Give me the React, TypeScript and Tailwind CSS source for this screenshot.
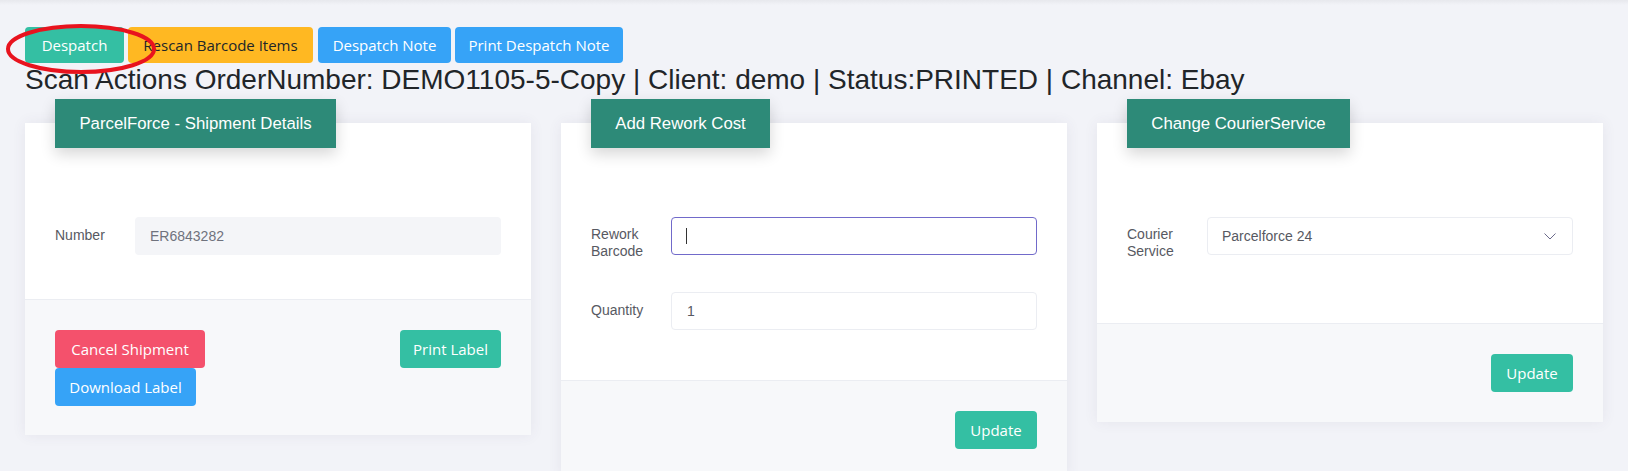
import React from "react";

function Btn({
  children,
  className,
}: {
  children: React.ReactNode;
  className: string;
}) {
  return (
    <div
      className={
        "flex items-center justify-center rounded-[4px] font-['Open_Sans',sans-serif] text-[15px] leading-none " +
        className
      }
    >
      {children}
    </div>
  );
}

function Tab({ title, width }: { title: string; width: string }) {
  return (
    <div
      className={
        "-mt-[24px] ml-[30px] flex h-[49px] items-center justify-center self-start bg-[#2d8a78] text-[16.8px] text-white shadow-[0_6px_14px_rgba(0,0,0,0.16)] " +
        width
      }
    >
      {title}
    </div>
  );
}

export default function App() {
  return (
    <div className="relative min-h-screen bg-[#f2f3f8] font-['Liberation_Sans',Arial,sans-serif] text-[#575962]">
      <div className="h-[5px] bg-gradient-to-b from-[#e7e8ed] to-[#f2f3f8]" />
      <div className="px-[25px]">
        <div className="mt-[22px] flex gap-[4px]">
          <Btn className="h-[36px] w-[99px] bg-[#34bfa3] text-white">Despatch</Btn>
          <Btn className="h-[36px] w-[185px] bg-[#ffb822] text-[#212529]">Rescan Barcode Items</Btn>
          <Btn className="ml-[1px] h-[36px] w-[133px] bg-[#36a3f7] text-white">Despatch Note</Btn>
          <Btn className="h-[36px] w-[168px] bg-[#36a3f7] text-white">Print Despatch Note</Btn>
        </div>
        <h3 className="mt-[1px] text-[28px] leading-[32px] text-[#212529]">
          Scan Actions OrderNumber: DEMO1105-5-Copy | Client: demo | Status:PRINTED | Channel: Ebay
        </h3>

        <div className="mt-[27px] grid grid-cols-3 items-start gap-[30px]">
          {/* Card 1 */}
          <div className="flex flex-col bg-white shadow-[0_0_13px_0_rgba(82,63,105,0.08)]">
            <Tab title="ParcelForce - Shipment Details" width="w-[281px]" />
            <div className="px-[30px] pt-[69px] pb-[44px]">
              <div className="flex">
                <div className="w-[80px] pt-[10px] text-[14px] leading-[17px]">Number</div>
                <div className="flex h-[38px] flex-1 items-center rounded-[4px] bg-[#f4f5f8] px-[15px] text-[14px] text-[#6f727d]">
                  ER6843282
                </div>
              </div>
            </div>
            <div className="flex justify-between border-t border-[#ebedf2] bg-[#f7f8fa] px-[30px] pt-[30px] pb-[29px]">
              <div className="flex flex-col">
                <Btn className="h-[38px] w-[150px] bg-[#f4516c] text-white">Cancel Shipment</Btn>
                <Btn className="h-[38px] w-[141px] bg-[#36a3f7] text-white">Download Label</Btn>
              </div>
              <Btn className="h-[38px] w-[101px] bg-[#34bfa3] text-white">Print Label</Btn>
            </div>
          </div>

          {/* Card 2 */}
          <div className="flex flex-col bg-white shadow-[0_0_13px_0_rgba(82,63,105,0.08)]">
            <Tab title="Add Rework Cost" width="w-[179px]" />
            <div className="flex flex-col gap-[32px] px-[30px] pt-[69px] pb-[50px]">
              <div className="flex">
                <div className="w-[80px] pt-[9px] text-[14px] leading-[17px]">
                  Rework
                  <br />
                  Barcode
                </div>
                <div className="flex h-[38px] flex-1 items-center rounded-[4px] border border-[#716aca] bg-white px-[14px]">
                  <span className="h-[16px] w-px bg-[#333]" />
                </div>
              </div>
              <div className="flex">
                <div className="w-[80px] pt-[10px] text-[14px] leading-[17px]">Quantity</div>
                <div className="flex h-[38px] flex-1 items-center rounded-[4px] border border-[#ebedf2] bg-white px-[15px] text-[14px] text-[#575962]">
                  1
                </div>
              </div>
            </div>
            <div className="flex justify-end border-t border-[#ebedf2] bg-[#f7f8fa] px-[30px] pt-[30px] pb-[30px]">
              <Btn className="h-[38px] w-[82px] bg-[#34bfa3] text-white">Update</Btn>
            </div>
          </div>

          {/* Card 3 */}
          <div className="flex flex-col bg-white shadow-[0_0_13px_0_rgba(82,63,105,0.08)]">
            <Tab title="Change CourierService" width="w-[223px]" />
            <div className="px-[30px] pt-[69px] pb-[63px]">
              <div className="flex">
                <div className="w-[80px] pt-[9px] text-[14px] leading-[17px]">
                  Courier
                  <br />
                  Service
                </div>
                <div className="flex h-[38px] flex-1 items-center justify-between rounded-[4px] border border-[#ebedf2] bg-white pr-[16px] pl-[14px] text-[14px] text-[#575962]">
                  <span>Parcelforce 24</span>
                  <svg width="12" height="7" viewBox="0 0 12 7" fill="none">
                    <path d="M0.5 0.5L6 6L11.5 0.5" stroke="#6b6a8a" strokeWidth="1" />
                  </svg>
                </div>
              </div>
            </div>
            <div className="flex justify-end border-t border-[#ebedf2] bg-[#f7f8fa] px-[30px] pt-[30px] pb-[30px]">
              <Btn className="h-[38px] w-[82px] bg-[#34bfa3] text-white">Update</Btn>
            </div>
          </div>
        </div>
      </div>

      {/* red annotation ellipse */}
      <svg
        className="pointer-events-none absolute left-[5px] top-[23px]"
        width="152"
        height="52"
        viewBox="0 0 152 52"
        fill="none"
      >
        <ellipse cx="76" cy="26" rx="73" ry="23" stroke="#e8131e" strokeWidth="4" />
      </svg>
    </div>
  );
}
